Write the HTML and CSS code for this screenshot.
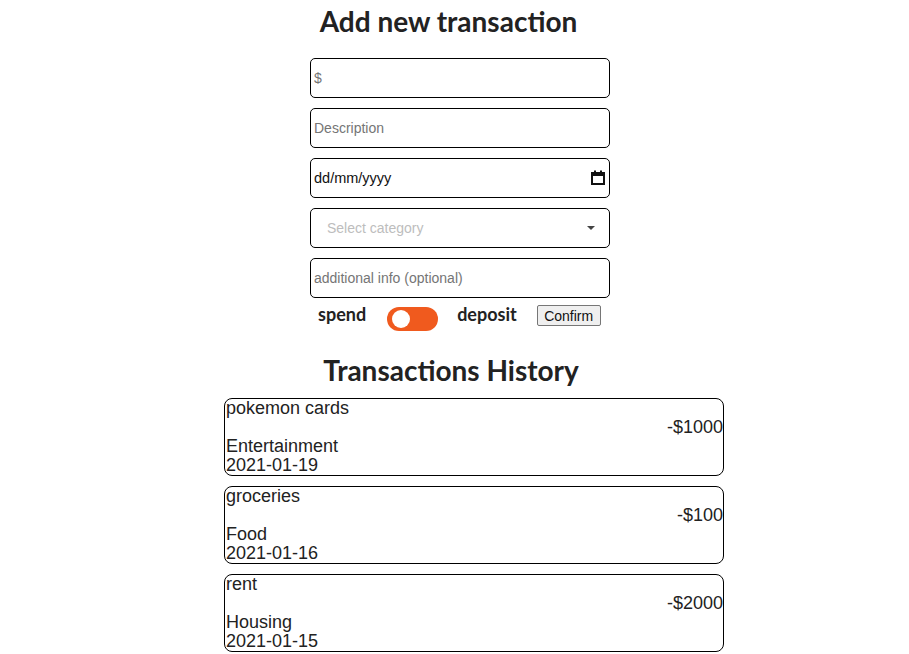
FILE: index.html
```html
<!DOCTYPE html>
<html>
<head>
<meta charset="utf-8">
<link rel="stylesheet" href="styles.css">
</head>
<body>
<div class="page">
  <h1 class="title">Add new transaction</h1>
  <form class="form">
    <input class="field" type="text" placeholder="$">
    <input class="field" type="text" placeholder="Description">
    <div class="field date">
      <span>dd/mm/yyyy</span>
      <svg class="cal" width="14" height="15" viewBox="0 0 14 15"><rect x="1" y="3" width="12" height="11" fill="none" stroke="#111" stroke-width="2"/><rect x="1" y="3" width="12" height="3" fill="#111"/><rect x="3" y="0.5" width="2" height="3" fill="#111"/><rect x="9" y="0.5" width="2" height="3" fill="#111"/></svg>
    </div>
    <div class="field select">
      <span class="select-ph">Select category</span>
      <span class="caret"></span>
    </div>
    <input class="field" type="text" placeholder="additional info (optional)">
    <div class="toggle-row">
      <span class="opt spend">spend</span>
      <span class="switch"><span class="knob"></span></span>
      <span class="opt deposit">deposit</span>
      <button type="button" class="confirm">Confirm</button>
    </div>
  </form>
  <h2 class="title history-title">Transactions History</h2>
  <div class="list">
    <div class="card">
      <div>pokemon cards</div>
      <div class="amount">-$1000</div>
      <div>Entertainment</div>
      <div>2021-01-19</div>
    </div>
    <div class="card">
      <div>groceries</div>
      <div class="amount">-$100</div>
      <div>Food</div>
      <div>2021-01-16</div>
    </div>
    <div class="card">
      <div>rent</div>
      <div class="amount">-$2000</div>
      <div>Housing</div>
      <div>2021-01-15</div>
    </div>
  </div>
</div>
</body>
</html>
```
FILE: styles.css
```css
html, body {
  margin: 0;
  padding: 0;
  background: #fff;
  overflow: hidden;
}
.page {
  width: 897px;
  display: flex;
  flex-direction: column;
  color: #222;
}
.title {
  font-family: Lato, "Open Sans", sans-serif;
  font-weight: 700;
  font-size: 28px;
  line-height: normal;
  text-align: center;
  margin: 4px 0 20px;
}
.form {
  width: 300px;
  margin-left: 310px;
  display: flex;
  flex-direction: column;
  gap: 10px;
}
.field {
  box-sizing: border-box;
  width: 300px;
  height: 40px;
  border: 1px solid #000;
  border-radius: 5px;
  padding: 1px 3px;
  font-family: "Liberation Sans", Arial, sans-serif;
  font-size: 14px;
  color: #111;
  background: #fff;
  margin: 0;
  outline: none;
}
.field::placeholder {
  color: #757575;
}
.date {
  display: flex;
  align-items: center;
  justify-content: space-between;
  padding: 0 4px 0 3px;
  font-size: 14.5px;
}
.cal {
  display: block;
  margin-top: -1px;
}
.select {
  display: flex;
  align-items: center;
  justify-content: space-between;
  padding: 0 14px 0 16px;
}
.select-ph {
  color: #bdbdbd;
}
.caret {
  width: 0;
  height: 0;
  border-left: 4px solid transparent;
  border-right: 4px solid transparent;
  border-top: 4px solid #444;
}
.toggle-row {
  display: flex;
  align-items: flex-start;
  height: 34px;
  margin-top: -10px;
}
.opt {
  font-family: Lato, "Open Sans", sans-serif;
  font-weight: 700;
  font-size: 18px;
  line-height: 21.6px;
  margin-top: 6px;
}
.spend {
  margin-left: 8px;
}
.switch {
  margin: 9px 19px 0 21px;
  width: 51px;
  height: 24px;
  border-radius: 12px;
  background: #f05a1e;
  display: flex;
  align-items: center;
  padding-left: 5px;
  box-sizing: border-box;
}
.knob {
  width: 18px;
  height: 18px;
  border-radius: 50%;
  background: #fff;
}
.confirm {
  margin: 7px 0 0 20px;
  width: 64px;
  height: 21px;
  padding: 0;
  font-family: "Liberation Sans", Arial, sans-serif;
  font-size: 14px;
  color: #111;
  background: #efefef;
  border: 1px solid #767676;
  border-radius: 2px;
}
.history-title {
  margin: 21px 0 11px;
  padding-left: 5px;
}
.list {
  margin-left: 224px;
  width: 500px;
  display: flex;
  flex-direction: column;
  gap: 10px;
}
.card {
  box-sizing: border-box;
  width: 500px;
  height: 78px;
  border: 1px solid #000;
  border-radius: 8px;
  padding: 0 0 0 1px;
  font-family: "Liberation Sans", Arial, sans-serif;
  font-size: 18px;
  line-height: 19px;
  color: #222;
}
.amount {
  text-align: right;
}
```
